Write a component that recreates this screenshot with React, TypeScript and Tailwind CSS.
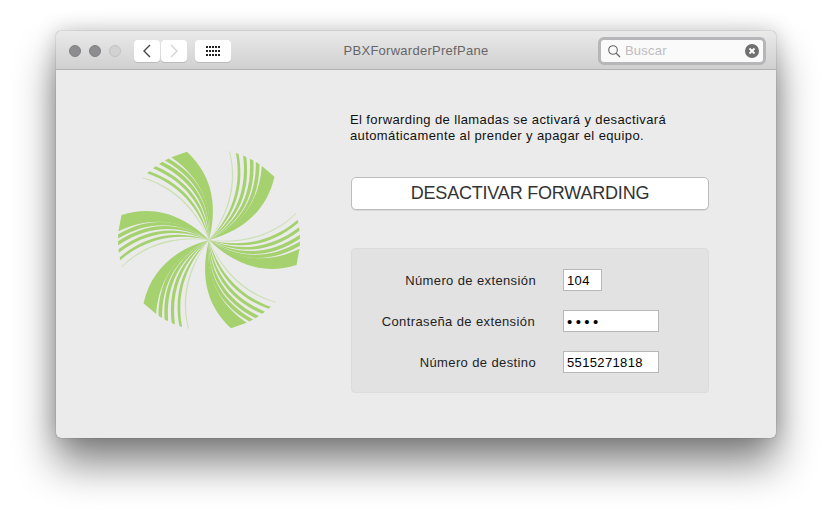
const bands: [number, number, number][] = [
  [14, 24.5, 1], [26.3, 29, 1], [30.8, 33.3, 1], [35.8, 38, 1],
  [41, 42.8, 1], [46.7, 47.3, 0.45],
];

const lerp = (a: number, b: number, t: number) => a + (b - a) * t;

function edge(angle: number, shift: number) {
  const t = (angle - 14) / 33;
  const k = Math.pow(Math.max(t, 0), 1.5) + shift;
  const rad = (angle * Math.PI) / 180;
  return {
    c1: [lerp(7, -10, k), lerp(-30, -24, k)],
    c2: [lerp(4, -30, k), lerp(-62, -52, k)],
    e: [-Math.sin(rad) * 91, -Math.cos(rad) * 91],
  };
}

function band(a0: number, a1: number) {
  const main = a0 === 14;
  const p = edge(a0, main ? -0.05 : -0.02);
  const q = edge(a1, main ? 0.05 : 0.02);
  const f = (n: number[]) => `${n[0].toFixed(2)} ${n[1].toFixed(2)}`;
  return `M0 0C${f(p.c1)} ${f(p.c2)} ${f(p.e)}L${f(q.e)}C${f(q.c2)} ${f(q.c1)} 0 0Z`;
}

function Logo() {
  return (
    <svg width="200" height="200" viewBox="-100 -100 200 200" className="block">
      {[0, 60, 120, 180, 240, 300].map((rot) => (
        <g key={rot} transform={`rotate(${rot})`}>
          {bands.map(([a, b, o]) => (
            <path key={a} d={band(a, b)} fill="#a5d26e" fillOpacity={o} />
          ))}
        </g>
      ))}
    </svg>
  );
}

function GridIcon() {
  return (
    <div className="grid grid-cols-5 gap-x-[1px] gap-y-[2px]">
      {Array.from({ length: 15 }).map((_, i) => (
        <div key={i} className="w-[2px] h-[2px] bg-[#222]" />
      ))}
    </div>
  );
}

function Row({ label, value, wide, pr = 0, dots }: { label: string; value: string; wide?: boolean; pr?: number; dots?: boolean }) {
  return (
    <div className="flex items-center h-[22px]">
      <div className="w-[184px] pt-[1px] text-right text-[13px] tracking-[0.38px] text-[#222]" style={{ paddingRight: pr }}>{label}</div>
      <div className={`ml-[27px] h-[22px] border border-[#b8b8b8] bg-white pl-[3px] pt-[1px] leading-[20px] text-black ${dots ? "text-[15px] tracking-[3.4px]" : "text-[13px] tracking-[0.35px]"} ${wide ? "w-[96px]" : "w-[39px]"}`}>
        {value}
      </div>
    </div>
  );
}

export default function App() {
  return (
    <div className="w-[832px] h-[518px] bg-white pl-[56px] pt-[31px] overflow-hidden font-['Liberation_Sans',Arial,sans-serif]">
      <div className="w-[720px] h-[407px] rounded-[5px] bg-[#ebebeb] overflow-hidden shadow-[0_26px_42px_rgba(0,0,0,0.48),0_0_22px_rgba(0,0,0,0.2),0_0_1px_rgba(0,0,0,0.6)]">
        <div className="h-[39px] pt-[1px] grid grid-cols-[1fr_auto_1fr] items-center border-b border-[#b2b1b2] bg-gradient-to-b from-[#ebeaeb] to-[#d1d0d1]">
          <div className="flex items-center pl-[13px]">
            <div className="w-[12px] h-[12px] rounded-full bg-[#8d8c8f] border border-[#807f82]" />
            <div className="ml-[8px] w-[12px] h-[12px] rounded-full bg-[#8d8c8f] border border-[#807f82]" />
            <div className="ml-[8px] w-[12px] h-[12px] rounded-full bg-[#d3d2d3] border border-[#c2c1c2]" />
            <div className="ml-[13px] w-[26px] h-[22px] rounded-[4px] bg-white flex items-center justify-center shadow-[0_1px_0_rgba(0,0,0,0.12)]">
              <svg width="10" height="14" viewBox="0 0 10 14" fill="none" stroke="#444" strokeWidth="1.4"><path d="M8 1 2 7l6 6" /></svg>
            </div>
            <div className="ml-[1px] w-[26px] h-[22px] rounded-[4px] bg-white flex items-center justify-center shadow-[0_1px_0_rgba(0,0,0,0.12)]">
              <svg width="10" height="14" viewBox="0 0 10 14" fill="none" stroke="#d4d4d4" strokeWidth="1.4"><path d="m2 1 6 6-6 6" /></svg>
            </div>
            <div className="ml-[8px] w-[36px] h-[22px] rounded-[4px] bg-white flex items-center justify-center shadow-[0_1px_0_rgba(0,0,0,0.12)]">
              <GridIcon />
            </div>
          </div>
          <div className="text-[13px] tracking-[0.27px] text-[#666]">PBXForwarderPrefPane</div>
          <div className="flex justify-end pr-[10px]">
            <div className="w-[168px] h-[28px] rounded-[6px] border-[3px] border-[#b6b5b8] bg-[#fafafa] flex items-center pl-[6px] pr-[4px]">
              <svg width="14" height="14" viewBox="0 0 14 14" fill="none" stroke="#666" strokeWidth="1.1"><circle cx="6" cy="6" r="4.3" /><path d="m9.2 9.2 3.8 3.8" strokeWidth="1.3" /></svg>
              <span className="ml-[4px] flex-1 text-[13px] tracking-[0.2px] text-[#bdbdbd]">Buscar</span>
              <svg width="14" height="14" viewBox="0 0 14 14"><circle cx="7" cy="7" r="7" fill="#6f6f6f" /><path d="m4.5 4.5 5 5m0-5-5 5" stroke="#fff" strokeWidth="1.8" /></svg>
            </div>
          </div>
        </div>
        <div className="flex">
          <div className="w-[295px] pl-[53px] pt-[70px] shrink-0">
            <Logo />
          </div>
          <div className="w-[358px]">
            <p className="mt-[42px] -ml-[1px] text-[13px] leading-[16px] tracking-[0.39px] text-[#111]">
              El forwarding de llamadas se activará y desactivará<br />automáticamente al prender y apagar el equipo.
            </p>
            <div className="mt-[33px] h-[33px] rounded-[5px] border border-[#bdbdbd] bg-white flex items-center justify-center text-[18px] tracking-[-0.2px] text-[#333] shadow-[0_1px_0_rgba(0,0,0,0.08)]">
              DESACTIVAR FORWARDING
            </div>
            <div className="mt-[38px] h-[145px] rounded-[4px] bg-[#e2e2e2] border border-[#dcdcdc] pt-[20px] flex flex-col gap-[19px]">
              <Row label="Número de extensión" value="104" />
              <Row label="Contraseña de extensión" value="••••" wide pr={1} dots />
              <Row label="Número de destino" value="5515271818" wide />
            </div>
          </div>
        </div>
      </div>
    </div>
  );
}
